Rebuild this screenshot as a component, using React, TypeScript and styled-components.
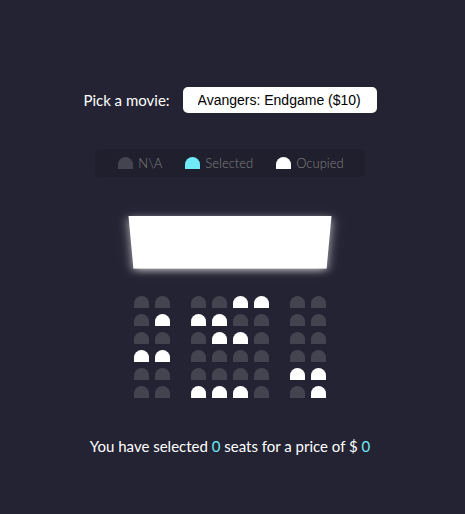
import React, { useState } from 'react';
import styled, { createGlobalStyle } from 'styled-components';

type SeatState = 'free' | 'selected' | 'occupied';

const seatColors: Record<SeatState, string> = {
  free: '#444451',
  selected: '#6feaf6',
  occupied: '#ffffff',
};

const GlobalStyle = createGlobalStyle`
  * { box-sizing: border-box; }
  body {
    margin: 0;
    background: #242333;
    color: #fff;
    font-family: Lato, sans-serif;
    font-weight: 400;
    font-size: 15px;
  }
`;

const Page = styled.main`
  min-height: 100vh;
  padding-right: 5px;
  display: flex;
  flex-direction: column;
  align-items: center;
  justify-content: center;
`;

const MoviePicker = styled.div`
  display: flex;
  align-items: center;
  gap: 13px;
  margin: 28px 0 36px;
`;

const MovieSelect = styled.select`
  appearance: none;
  border: 0;
  border-radius: 5px;
  background: #fff;
  color: #000;
  padding: 5px 15px;
  height: 26px;
  font: 14px "Liberation Sans", Arial, sans-serif;
`;

const Legend = styled.ul`
  display: flex;
  gap: 23px;
  list-style: none;
  margin: 0;
  padding: 5px 21px 5px 23px;
  border-radius: 5px;
  background: rgba(0, 0, 0, 0.1);
  color: #808080;
  font-size: 13px;
  font-weight: 300;
  line-height: 18px;
`;

const LegendItem = styled.li`
  display: flex;
  align-items: center;
  gap: 5px;
`;

const Swatch = styled.span<{ $state: SeatState }>`
  width: 15px;
  height: 12px;
  border-radius: 10px 10px 0 0;
  background: ${({ $state }) => seatColors[$state]};
`;

const Theater = styled.div`
  display: flex;
  flex-direction: column;
  align-items: center;
  perspective: 1000px;
  margin-top: 31px;
`;

const Screen = styled.div`
  width: 198px;
  height: 70px;
  margin-bottom: 10px;
  background: #fff;
  transform: rotateX(-45deg);
  box-shadow: 0 3px 10px rgba(255, 255, 255, 0.7);
`;

const Seats = styled.div`
  display: grid;
  gap: 6px;
  margin-top: 8px;
`;

const SeatRow = styled.div`
  display: flex;
  gap: 6px;
`;

const Seat = styled.button<{ $state: SeatState }>`
  width: 15px;
  height: 12px;
  padding: 0;
  border: 0;
  border-radius: 10px 10px 0 0;
  background: ${({ $state }) => seatColors[$state]};

  &:nth-child(2), &:nth-child(6) { margin-right: 15px; }
`;

const Summary = styled.p`
  margin: 38px 0 0;
  line-height: 20px;
`;

const Amount = styled.span`
  color: #6feaf6;
`;

const occupied = [[4, 5], [1, 2, 3], [3, 4], [0, 1], [6, 7], [2, 3, 4, 7]];

const legend: { label: string; state: SeatState }[] = [
  { label: 'N\\A', state: 'free' },
  { label: 'Selected', state: 'selected' },
  { label: 'Ocupied', state: 'occupied' },
];

export default function App() {
  const [selected, setSelected] = useState<string[]>([]);
  const toggle = (id: string) =>
    setSelected((ids) => (ids.includes(id) ? ids.filter((i) => i !== id) : [...ids, id]));

  return (
    <>
      <GlobalStyle />
      <Page>
        <MoviePicker>
          <label htmlFor="movie">Pick a movie:</label>
          <MovieSelect id="movie">
            <option value="10">Avangers: Endgame ($10)</option>
          </MovieSelect>
        </MoviePicker>
        <Legend>
          {legend.map(({ label, state }) => (
            <LegendItem key={label}>
              <Swatch $state={state} />
              {label}
            </LegendItem>
          ))}
        </Legend>
        <Theater>
          <Screen />
          <Seats>
            {occupied.map((taken, row) => (
              <SeatRow key={row}>
                {Array.from({ length: 8 }, (_, col) => {
                  const id = `${row}-${col}`;
                  const isTaken = taken.includes(col);
                  const state = isTaken ? 'occupied' : selected.includes(id) ? 'selected' : 'free';
                  return (
                    <Seat
                      key={id}
                      $state={state}
                      disabled={isTaken}
                      aria-label={`Row ${row + 1}, seat ${col + 1}`}
                      onClick={() => toggle(id)}
                    />
                  );
                })}
              </SeatRow>
            ))}
          </Seats>
        </Theater>
        <Summary>
          You have selected <Amount>{selected.length}</Amount> seats for a price of ${' '}
          <Amount>{selected.length * 10}</Amount>
        </Summary>
      </Page>
    </>
  );
}
